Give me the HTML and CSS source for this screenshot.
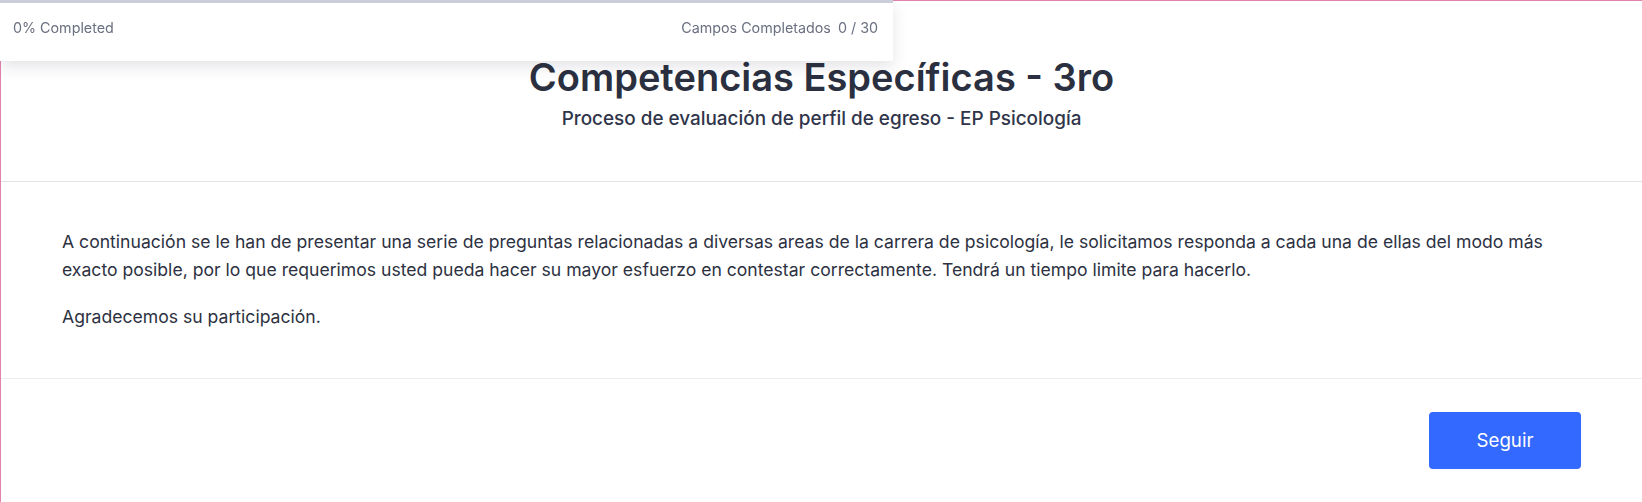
FILE: index.html
```html
<!DOCTYPE html>
<html lang="es">
<head>
  <meta charset="UTF-8">
  <meta name="viewport" content="width=device-width, initial-scale=1">
  <title>Competencias Específicas - 3ro</title>
  <link rel="stylesheet" href="styles.css">
</head>
<body>

  <div class="progress-card">
    <div class="progress-track"><div class="progress-fill" style="width: 0%;"></div></div>
    <div class="progress-info">
      <div><span>0%</span> <span>Completed</span></div>
      <div><span>Campos Completados</span> <span class="count">0 / 30</span></div>
    </div>
  </div>

  <div class="page">
    <div class="header">
      <h1 class="title">Competencias Específicas - 3ro</h1>
      <div class="subtitle">Proceso de evaluación de perfil de egreso - EP Psicología</div>
    </div>

    <div class="intro">
      <p>A continuación se le han de presentar una serie de preguntas relacionadas a diversas areas de la carrera de psicología, le solicitamos responda a cada una de ellas del modo más exacto posible, por lo que requerimos usted pueda hacer su mayor esfuerzo en contestar correctamente. Tendrá un tiempo limite para hacerlo.</p>
      <p>Agradecemos su participación.</p>
    </div>

    <div class="footer">
      <button class="btn">Seguir</button>
    </div>
  </div>

</body>
</html>
```

FILE: styles.css
```css
body {
  margin: 0;
  font-family: Inter, "Noto Sans", sans-serif;
  color: #2d3142;
  background: #ffffff;
}
.page {
  border-top: 1px solid #e283ab;
  border-left: 1px solid #e283ab;
  min-height: 502px;
  box-sizing: border-box;
}
.progress-card {
  position: fixed;
  top: 0;
  left: 0;
  width: 893px;
  background: #ffffff;
  box-shadow: 0 6px 14px rgba(40, 45, 70, 0.12);
  z-index: 10;
}
.progress-track {
  height: 3px;
  background: #c9ced8;
}
.progress-fill {
  height: 3px;
  background: #3366ff;
}
.progress-info {
  display: flex;
  justify-content: space-between;
  padding: 15px 15px 23px 13px;
  font-size: 14.3px;
  line-height: 20px;
  color: #6b7080;
}
.progress-info .count {
  margin-left: 3px;
}
.header {
  text-align: center;
  padding: 53px 20px 49px;
  border-bottom: 1px solid #e2e2e9;
}
.title {
  margin: 0;
  font-size: 38px;
  line-height: 46px;
  font-weight: 600;
  color: #2b3040;
}
.subtitle {
  margin-top: 6px;
  font-size: 18.9px;
  line-height: 26px;
  font-weight: 500;
  color: #30354a;
}
.intro {
  padding: 46px 61px 47px;
  border-bottom: 1px solid #ececf1;
  font-size: 17.6px;
  line-height: 28px;
}
.intro p {
  margin: 0 0 18.7px;
}
.intro p:last-child {
  margin-bottom: 0;
}
.footer {
  display: flex;
  justify-content: flex-end;
  padding: 33px 61px 33px;
}
.btn {
  width: 152px;
  height: 57px;
  border: none;
  border-radius: 4px;
  background: #3369ff;
  color: #ffffff;
  font-family: Inter, "Noto Sans", sans-serif;
  font-size: 18.7px;
  font-weight: 400;
}
```
